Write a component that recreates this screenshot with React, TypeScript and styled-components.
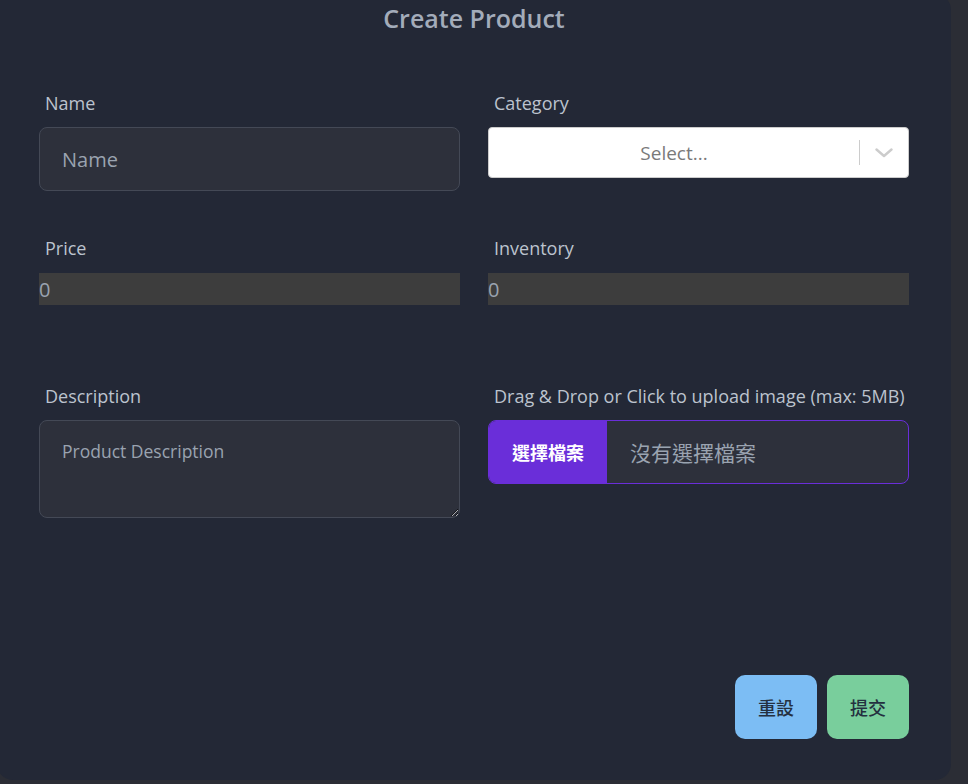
import React from "react";
import styled, { createGlobalStyle } from "styled-components";

const GlobalStyle = createGlobalStyle`
  html, body {
    margin: 0;
    padding: 0;
    background: #2b2d35;
    overflow: hidden;
  }
  body {
    font-family: "Open Sans", "Noto Sans CJK TC", sans-serif;
  }
  * { box-sizing: border-box; }
`;

const Card = styled.div`
  width: 954px;
  height: 786px;
  margin: -6px 0 0 -3px;
  background: #232836;
  border-radius: 16px;
  padding: 8px 42px 0 42px;
  display: flex;
  flex-direction: column;
`;

const Title = styled.h1`
  margin: 0;
  text-align: center;
  font-size: 25px;
  line-height: 32px;
  font-weight: 600;
  color: #a3acba;
`;

const FormGrid = styled.form`
  margin-top: 57px;
  display: grid;
  grid-template-columns: 421px 421px;
  grid-template-rows: 145px 148px 146px;
  column-gap: 28px;
`;

const Field = styled.div`
  display: flex;
  flex-direction: column;
  gap: 12px;
`;

const Label = styled.label`
  padding-left: 6px;
  font-size: 18px;
  line-height: 24px;
  color: #bcc3ce;
  white-space: nowrap;
`;

const TextInput = styled.input`
  height: 64px;
  border: 1px solid #444956;
  border-radius: 8px;
  background: #2d303b;
  padding: 0 22px;
  font-family: inherit;
  font-size: 20px;
  color: #d1d5db;
  outline: none;
  &::placeholder { color: #9aa3b0; }
`;

const NumberInput = styled.input`
  height: 32px;
  border: none;
  background: #3d3d3d;
  padding: 0;
  margin-top: 1px;
  font-family: inherit;
  font-size: 20px;
  color: #9aa3b0;
  outline: none;
  &::-webkit-inner-spin-button, &::-webkit-outer-spin-button { opacity: 0; }
`;

const TextArea = styled.textarea`
  height: 98px;
  border: 1px solid #444956;
  border-radius: 8px;
  background: #2d303b;
  padding: 18px 22px;
  font-family: inherit;
  font-size: 17.5px;
  color: #d1d5db;
  outline: none;
  resize: vertical;
  &::placeholder { color: #9aa3b0; }
`;

const SelectBox = styled.div`
  height: 51px;
  background: #ffffff;
  border: 1px solid #cccccc;
  border-radius: 4px;
  display: flex;
  align-items: center;
`;

const SelectValue = styled.div`
  flex: 1;
  text-align: center;
  font-size: 19px;
  color: #7a7a7a;
`;

const SelectSeparator = styled.span`
  width: 1px;
  align-self: stretch;
  margin: 12px 0;
  background: #cccccc;
`;

const SelectIndicator = styled.div`
  width: 48px;
  display: flex;
  align-items: center;
  justify-content: center;
  color: #cccccc;
`;

const FileBox = styled.label`
  height: 64px;
  border: 1px solid #6a2ed9;
  border-radius: 8px;
  background: #2d303b;
  display: flex;
  align-items: stretch;
  overflow: hidden;
  font-family: "Noto Sans CJK TC", sans-serif;
`;

const FileButton = styled.span`
  width: 118px;
  background: #6a2ed9;
  color: #ffffff;
  font-weight: 700;
  font-size: 18px;
  display: flex;
  align-items: center;
  justify-content: center;
`;

const FileName = styled.span`
  padding-left: 23px;
  display: flex;
  align-items: center;
  font-size: 21px;
  color: #9aa3b0;
`;

const Actions = styled.div`
  margin-top: auto;
  margin-bottom: 41px;
  display: flex;
  justify-content: flex-end;
  gap: 10px;
`;

const ActionButton = styled.button<{ $bg: string }>`
  width: 82px;
  height: 64px;
  border: none;
  border-radius: 10px;
  background: ${(p) => p.$bg};
  color: #243040;
  font-family: "Noto Sans CJK TC", sans-serif;
  font-size: 18px;
  font-weight: 500;
  cursor: pointer;
`;

const Chevron = () => (
  <svg width="18" height="10" viewBox="0 0 18 10" fill="none">
    <polyline
      points="1.5,1.5 9,8 16.5,1.5"
      stroke="currentColor"
      strokeWidth="2.4"
      strokeLinecap="round"
      strokeLinejoin="round"
    />
  </svg>
);

export default function App() {
  return (
    <>
      <GlobalStyle />
      <Card>
        <Title>Create Product</Title>
        <FormGrid onSubmit={(e) => e.preventDefault()}>
          <Field>
            <Label>Name</Label>
            <TextInput placeholder="Name" />
          </Field>
          <Field>
            <Label>Category</Label>
            <SelectBox>
              <SelectValue>Select...</SelectValue>
              <SelectSeparator />
              <SelectIndicator>
                <Chevron />
              </SelectIndicator>
            </SelectBox>
          </Field>
          <Field>
            <Label>Price</Label>
            <NumberInput type="number" defaultValue={0} />
          </Field>
          <Field>
            <Label>Inventory</Label>
            <NumberInput type="number" defaultValue={0} />
          </Field>
          <Field>
            <Label>Description</Label>
            <TextArea placeholder="Product Description" />
          </Field>
          <Field>
            <Label>Drag &amp; Drop or Click to upload image (max: 5MB)</Label>
            <FileBox>
              <FileButton>選擇檔案</FileButton>
              <FileName>沒有選擇檔案</FileName>
            </FileBox>
          </Field>
        </FormGrid>
        <Actions>
          <ActionButton type="button" $bg="#7cbdf4">重設</ActionButton>
          <ActionButton type="submit" $bg="#79ce9c">提交</ActionButton>
        </Actions>
      </Card>
    </>
  );
}
